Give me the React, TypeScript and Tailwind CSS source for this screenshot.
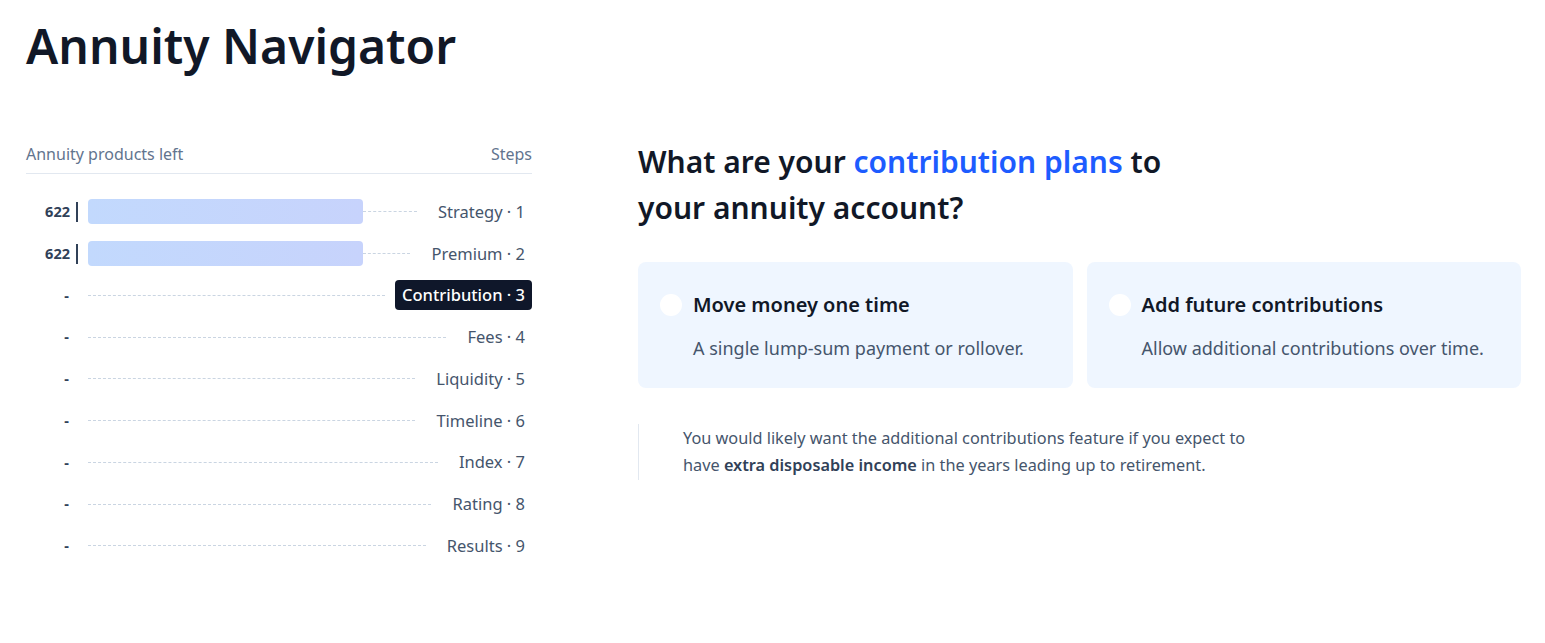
import React from 'react';

type Step = { label: string; count?: number; active?: boolean };

const steps: Step[] = [
  { label: 'Strategy · 1', count: 622 },
  { label: 'Premium · 2', count: 622 },
  { label: 'Contribution · 3', active: true },
  { label: 'Fees · 4' },
  { label: 'Liquidity · 5' },
  { label: 'Timeline · 6' },
  { label: 'Index · 7' },
  { label: 'Rating · 8' },
  { label: 'Results · 9' },
];

const options = [
  { title: 'Move money one time', text: 'A single lump-sum payment or rollover.' },
  { title: 'Add future contributions', text: 'Allow additional contributions over time.' },
];

const StepRow: React.FC<{ step: Step }> = ({ step }) => (
  <div className="flex items-center h-[41.75px]">
    <div className="w-[44px] text-right text-[14.5px] font-bold text-slate-700">
      {step.count ?? <span className="pr-[1px]">-</span>}
    </div>
    <div className={`w-[2px] h-5 ml-[6px] mr-[10px] ${step.count ? 'bg-slate-700' : ''}`} />
    <div className="flex-1 flex items-center">
      {step.count && (
        <div className="w-[275px] h-[25px] rounded-[4px] bg-gradient-to-r from-[#c2d9fd] to-[#c7d3fc]" />
      )}
      <div className="flex-1 border-t border-dashed border-slate-300" />
      <div
        className={`px-[7px] rounded-[4px] text-[16.5px] leading-[30px] ${
          step.active ? 'bg-[#0f172a] text-white font-medium ml-[10px]' : 'text-slate-600 ml-[14px]'
        }`}
      >
        {step.label}
      </div>
    </div>
  </div>
);

export default function App() {
  return (
    <div
      className="min-h-screen bg-white pl-[26px] pr-[24px] pt-[15px] text-slate-900"
      style={{ fontFamily: '"Noto Sans", "Open Sans", sans-serif' }}
    >
      <h1 className="text-[48px] leading-[62px] font-semibold text-[#111827]">Annuity Navigator</h1>

      <div className="flex mt-[52px] gap-[106px]">
        {/* Steps sidebar */}
        <div className="w-[506px] shrink-0 pt-[13px]">
          <div className="flex justify-between items-center pb-[7px] border-b border-slate-200 text-[16px] leading-[24px] text-slate-500">
            <span>Annuity products left</span>
            <span>Steps</span>
          </div>
          <div className="mt-[17px]">
            {steps.map((s) => (
              <StepRow key={s.label} step={s} />
            ))}
          </div>
        </div>

        {/* Question */}
        <div className="flex-1 pt-[10px]">
          <h2 className="text-[30px] leading-[46px] font-semibold text-[#111827] max-w-[560px]">
            What are your <span className="text-[#1d5cff]">contribution plans</span> to your annuity account?
          </h2>

          <div className="grid grid-cols-2 gap-[14px] mt-[31px]">
            {options.map((o) => (
              <div key={o.title} className="h-[126px] rounded-lg bg-[#eff6ff] pl-[22px] pt-[29px]">
                <div className="flex items-center gap-[11px]">
                  <div className="w-[22px] h-[22px] rounded-full bg-white" />
                  <div className="text-[20px] font-semibold text-[#111827] leading-[28px]">{o.title}</div>
                </div>
                <div className="ml-[33px] mt-[15px] text-[18px] text-slate-600 leading-[28px]">{o.text}</div>
              </div>
            ))}
          </div>

          <div className="mt-[36px] border-l border-slate-200 pl-[44px] py-[1px]">
            <p className="max-w-[575px] text-[16.3px] leading-[27px] text-slate-600">
              You would likely want the additional contributions feature if you expect to have{' '}
              <span className="font-semibold text-slate-700">extra disposable income</span> in the years leading up to retirement.
            </p>
          </div>
        </div>
      </div>
    </div>
  );
}
